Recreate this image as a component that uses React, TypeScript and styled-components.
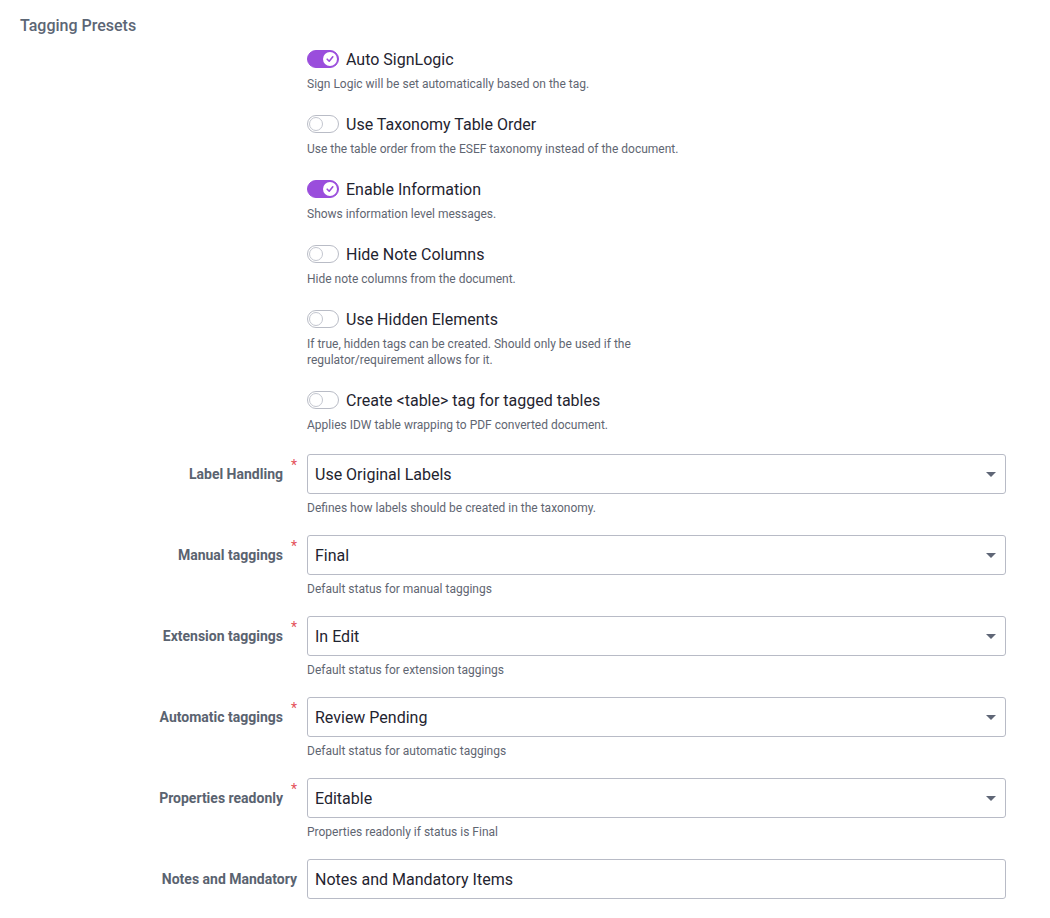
import React from 'react'
import styled, { createGlobalStyle } from 'styled-components'

const GlobalStyle = createGlobalStyle`
  body { margin: 0; background: #fff; font-family: Roboto, sans-serif; }
`

const Page = styled.div`
  padding: 16px 20px 20px 20px;
`

const Title = styled.h2`
  margin: 0 0 11px 0;
  font-size: 16px;
  font-weight: 500;
  line-height: 20px;
  color: #5c6675;
`

const Form = styled.div`
  display: flex;
  flex-direction: column;
`

const Row = styled.div<{ $gap?: number }>`
  display: grid;
  grid-template-columns: 287px 699px;
  margin-bottom: ${({ $gap = 20 }) => $gap}px;
`

const LabelCell = styled.div<{ $required?: boolean }>`
  display: flex;
  justify-content: flex-end;
  align-items: center;
  padding-right: ${({ $required }) => ($required ? 24 : 10)}px;
  height: 40px;
  position: relative;
`

const Label = styled.span`
  font-size: 14px;
  font-weight: 700;
  color: #5a6370;
`

const Star = styled.span`
  position: absolute;
  right: 10px;
  top: 3px;
  color: #e4525b;
  font-size: 14px;
`

const Field = styled.div`
  display: flex;
  flex-direction: column;
`

const ToggleLine = styled.label`
  display: flex;
  align-items: center;
  gap: 7px;
  height: 24px;
  font-size: 16px;
  color: #1f2430;
`

const Track = styled.span<{ $on: boolean }>`
  position: relative;
  width: 32px;
  height: 18px;
  border-radius: 10px;
  box-sizing: border-box;
  background: ${({ $on }) => ($on ? '#9a4ddc' : '#fff')};
  border: 1px solid ${({ $on }) => ($on ? '#9a4ddc' : '#b9bcc6')};
`

const Knob = styled.span<{ $on: boolean }>`
  position: absolute;
  top: 1px;
  left: ${({ $on }) => ($on ? '15px' : '1px')};
  width: 14px;
  height: 14px;
  border-radius: 50%;
  background: #fff;
  box-sizing: border-box;
  border: ${({ $on }) => ($on ? 'none' : '1px solid #c3c6cf')};
  display: flex;
  align-items: center;
  justify-content: center;
`

const Help = styled.div<{ $top?: number }>`
  margin-top: ${({ $top = 5 }) => $top}px;
  font-size: 12px;
  line-height: 16px;
  color: #5f6672;
  max-width: 400px;
`

const NarrowHelp = styled(Help)`
  max-width: 340px;
`

const Box = styled.div`
  height: 40px;
  box-sizing: border-box;
  border: 1px solid #b8bbc6;
  border-radius: 3px;
  display: flex;
  align-items: center;
  justify-content: space-between;
  padding: 0 9px 0 7px;
  font-size: 16px;
  color: #1f2430;
`

const Caret = styled.span`
  width: 0;
  height: 0;
  border-left: 5px solid transparent;
  border-right: 5px solid transparent;
  border-top: 5px solid #5f6676;
`

const toggles = [
  { label: 'Auto SignLogic', on: true, help: 'Sign Logic will be set automatically based on the tag.' },
  { label: 'Use Taxonomy Table Order', on: false, help: 'Use the table order from the ESEF taxonomy instead of the document.' },
  { label: 'Enable Information', on: true, help: 'Shows information level messages.' },
  { label: 'Hide Note Columns', on: false, help: 'Hide note columns from the document.' },
  { label: 'Use Hidden Elements', on: false, help: 'If true, hidden tags can be created. Should only be used if the regulator/requirement allows for it.', narrow: true },
  { label: 'Create <table> tag for tagged tables', on: false, help: 'Applies IDW table wrapping to PDF converted document.' },
]

const selects = [
  { label: 'Label Handling', value: 'Use Original Labels', help: 'Defines how labels should be created in the taxonomy.' },
  { label: 'Manual taggings', value: 'Final', help: 'Default status for manual taggings' },
  { label: 'Extension taggings', value: 'In Edit', help: 'Default status for extension taggings' },
  { label: 'Automatic taggings', value: 'Review Pending', help: 'Default status for automatic taggings' },
  { label: 'Properties readonly', value: 'Editable', help: 'Properties readonly if status is Final' },
]

export default function App() {
  return (
    <Page>
      <GlobalStyle />
      <Title>Tagging Presets</Title>
      <Form>
        {toggles.map((t, i) => (
          <Row key={t.label} $gap={i === toggles.length - 1 ? 21 : 20}>
            <div />
            <Field>
              <ToggleLine>
                <Track $on={t.on}>
                  <Knob $on={t.on}>
                    {t.on && (
                      <svg width="10" height="10" viewBox="0 0 10 10">
                        <path d="M2.2 5.2 L4.2 7.2 L7.8 2.8" fill="none" stroke="#9a4ddc" strokeWidth="1.6" strokeLinecap="round" strokeLinejoin="round" />
                      </svg>
                    )}
                  </Knob>
                </Track>
                {t.label}
              </ToggleLine>
              {t.narrow ? <NarrowHelp>{t.help}</NarrowHelp> : <Help>{t.help}</Help>}
            </Field>
          </Row>
        ))}
        {selects.map((s) => (
          <Row key={s.label} $gap={19}>
            <LabelCell $required>
              <Label>{s.label}</Label>
              <Star>*</Star>
            </LabelCell>
            <Field>
              <Box>
                {s.value}
                <Caret />
              </Box>
              <Help $top={6}>{s.help}</Help>
            </Field>
          </Row>
        ))}
        <Row>
          <LabelCell>
            <Label>Notes and Mandatory</Label>
          </LabelCell>
          <Field>
            <Box>Notes and Mandatory Items</Box>
          </Field>
        </Row>
      </Form>
    </Page>
  )
}
